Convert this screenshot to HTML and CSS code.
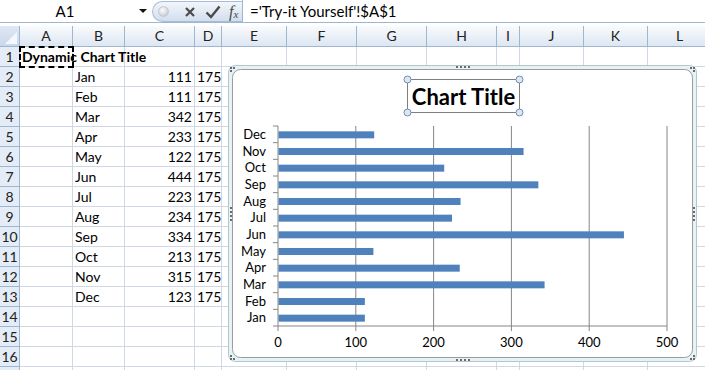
FILE: index.html
```html
<!DOCTYPE html>
<html lang="en">

<head>
    <meta charset="UTF-8">
    <title>Dynamic Chart Title</title>
    <link rel="stylesheet" href="styles.css">
</head>

<body>
    <div class="formula-bar">
        <div class="name-box">
            <span class="cell-ref">A1</span>
            <span class="dropdown"></span>
        </div>
        <div class="fx-pill">
            <span class="knob"></span>
            <svg class="fx-icon" width="12" height="12" viewBox="0 0 12 12">
                <path d="M2 2 L10 10 M10 2 L2 10" stroke="#4a4a4a" stroke-width="2.2" fill="none" />
            </svg>
            <svg class="fx-icon" width="16" height="14" viewBox="0 0 16 14">
                <path d="M1.5 7.5 L6 12 L14.5 1.5" stroke="#4a4a4a" stroke-width="2.4" fill="none" />
            </svg>
            <span class="fx-label">f<sub>x</sub></span>
        </div>
        <div class="formula">='Try-it Yourself'!$A$1</div>
    </div>

    <div class="sheet">
        <div class="grid" id="grid"></div>

        <svg class="chart" width="469" height="297" viewBox="0 0 469 297">
            <rect x="0.5" y="0.5" width="468" height="296" rx="7" fill="#e3f3f6" stroke="#b9c4ca" />
            <rect x="4.5" y="4.5" width="460" height="288" rx="8" fill="#fff" stroke="#9c9c9c" />

            <g class="handles">
                <rect x="2" y="2" width="2" height="2" /><rect x="5" y="2" width="2" height="2" /><rect x="2" y="5" width="2" height="2" />
                <rect x="462" y="2" width="2" height="2" /><rect x="465" y="2" width="2" height="2" /><rect x="465" y="5" width="2" height="2" />
                <rect x="2" y="290" width="2" height="2" /><rect x="2" y="293" width="2" height="2" /><rect x="5" y="293" width="2" height="2" />
                <rect x="465" y="290" width="2" height="2" /><rect x="462" y="293" width="2" height="2" /><rect x="465" y="293" width="2" height="2" />
                <rect x="228" y="1" width="2" height="2" /><rect x="232" y="1" width="2" height="2" /><rect x="236" y="1" width="2" height="2" /><rect x="240" y="1" width="2" height="2" />
                <rect x="228" y="294" width="2" height="2" /><rect x="232" y="294" width="2" height="2" /><rect x="236" y="294" width="2" height="2" /><rect x="240" y="294" width="2" height="2" />
                <rect x="2" y="142" width="2" height="2" /><rect x="2" y="146" width="2" height="2" /><rect x="2" y="150" width="2" height="2" /><rect x="2" y="154" width="2" height="2" />
                <rect x="465" y="142" width="2" height="2" /><rect x="465" y="146" width="2" height="2" /><rect x="465" y="150" width="2" height="2" /><rect x="465" y="154" width="2" height="2" />
            </g>

            <g class="axis">
                <line x1="127.8" y1="61" x2="127.8" y2="266" />
                <line x1="205.6" y1="61" x2="205.6" y2="266" />
                <line x1="283.4" y1="61" x2="283.4" y2="266" />
                <line x1="361.2" y1="61" x2="361.2" y2="266" />
                <line x1="439" y1="61" x2="439" y2="266" />
                <line x1="50" y1="61" x2="50" y2="266" />
                <line x1="50" y1="261" x2="439" y2="261" />
            </g>
            <g class="axis" id="cat-ticks"></g>
            <g id="bars"></g>
            <g class="cat-labels" id="cat-labels"></g>

            <g class="val-labels">
                <text x="50" y="282">0</text>
                <text x="127.8" y="282">100</text>
                <text x="205.6" y="282">200</text>
                <text x="283.4" y="282">300</text>
                <text x="361.2" y="282">400</text>
                <text x="439" y="282">500</text>
            </g>

            <rect x="179.5" y="14.5" width="112" height="33" fill="#fff" stroke="#7f7f7f" />
            <text class="chart-title" x="235.5" y="39.5">Chart Title</text>
            <g class="title-handles">
                <circle cx="179.5" cy="14.5" r="3.5" /><circle cx="291.5" cy="14.5" r="3.5" />
                <circle cx="179.5" cy="47.5" r="3.5" /><circle cx="291.5" cy="47.5" r="3.5" />
            </g>
        </svg>
    </div>

    <script>
        const months = ['Jan', 'Feb', 'Mar', 'Apr', 'May', 'Jun', 'Jul', 'Aug', 'Sep', 'Oct', 'Nov', 'Dec'];
        const values = [111, 111, 342, 233, 122, 444, 223, 234, 334, 213, 315, 123];
        const columns = ['A', 'B', 'C', 'D', 'E', 'F', 'G', 'H', 'I', 'J', 'K', 'L'];

        const grid = document.getElementById('grid');

        function addCell(className, text) {
            const div = document.createElement('div');
            div.className = className;
            div.textContent = text || '';
            grid.appendChild(div);
            return div;
        }

        addCell('corner');
        for (const col of columns) {
            addCell('col-head', col);
        }

        // row 17 only peeks in at the bottom edge, so it gets no number
        for (let row = 1; row <= 17; row++) {
            addCell('row-head', row < 17 ? row : '');
            for (let c = 0; c < columns.length; c++) {
                let text = '';
                let cls = 'cell';
                if (row === 1 && c === 0) {
                    text = 'Dynamic Chart Title';
                    cls += ' bold selected';
                }
                if (row >= 2 && row <= 13) {
                    if (c === 1) text = months[row - 2];
                    if (c === 2) { text = values[row - 2]; cls += ' num'; }
                    if (c === 3) { text = 175; cls += ' num'; }
                }
                addCell(cls, text);
            }
        }

        // bar chart, Dec on top
        const svgNs = 'http://www.w3.org/2000/svg';
        const plotTop = 61, step = 200 / 12, scale = 389 / 500;
        const bars = document.getElementById('bars');
        const labels = document.getElementById('cat-labels');
        const ticks = document.getElementById('cat-ticks');

        for (let i = 0; i <= 12; i++) {
            const line = document.createElementNS(svgNs, 'line');
            const y = plotTop + step * i;
            line.setAttribute('x1', 45);
            line.setAttribute('x2', 50);
            line.setAttribute('y1', y);
            line.setAttribute('y2', y);
            ticks.appendChild(line);
        }

        for (let i = 0; i < 12; i++) {
            const m = 11 - i;
            const cy = plotTop + step * (i + 0.5);
            const bar = document.createElementNS(svgNs, 'rect');
            bar.setAttribute('x', 50.5);
            bar.setAttribute('y', cy - 3);
            bar.setAttribute('width', values[m] * scale);
            bar.setAttribute('height', 7);
            bar.setAttribute('fill', '#4f81bd');
            bars.appendChild(bar);

            const label = document.createElementNS(svgNs, 'text');
            label.setAttribute('x', 38);
            label.setAttribute('y', cy + 4.5);
            label.textContent = months[m];
            labels.appendChild(label);
        }
    </script>
</body>

</html>
```

FILE: styles.css
```css
body {
    margin: 0;
    width: 705px;
    height: 370px;
    overflow: hidden;
    background-color: #fff;
    font-family: Lato, "Liberation Sans", sans-serif;
    color: #000;
}

.formula-bar {
    display: flex;
    height: 22px;
    border-bottom: 1px solid #9eb6ce;
}

.name-box {
    width: 152px;
    display: flex;
    align-items: center;
}

.cell-ref {
    width: 130px;
    text-align: center;
    font-size: 15px;
}

.dropdown {
    margin-left: 9px;
    border-left: 4px solid transparent;
    border-right: 4px solid transparent;
    border-top: 4px solid #111;
}

.fx-pill {
    width: 84px;
    height: 19px;
    margin-top: 1px;
    border: 1px solid #a7bcd5;
    border-right: none;
    border-radius: 11px 0 0 11px;
    background: linear-gradient(#f2f6fb, #d2deee);
    display: flex;
    align-items: center;
    gap: 9px;
    padding-left: 5px;
}

.knob {
    width: 9px;
    height: 9px;
    border-radius: 50%;
    background: radial-gradient(circle at 40% 35%, #fdfdfd, #b9bfc7);
    border: 1px solid #c3c9d2;
    margin-right: 6px;
}

.fx-label {
    font-family: "Liberation Serif", serif;
    font-style: italic;
    font-size: 16px;
    color: #4a4a4a;
    margin-left: -1px;
}

.fx-label sub {
    font-size: 11px;
    vertical-align: -1px;
}

.formula {
    flex: 1;
    border-left: 1px solid #9eb6ce;
    padding-left: 7px;
    line-height: 22px;
    font-size: 15px;
    white-space: nowrap;
}

.sheet {
    position: relative;
    margin-top: 3px;
    height: 344px;
    overflow: hidden;
}

.grid {
    display: grid;
    grid-template-columns: 20px 53px 52px 70px 27px 65px 70px 70px 70px 23px 64px 64px 64px;
    grid-template-rows: 21px repeat(17, 20px);
    width: 712px;
}

.corner {
    background: linear-gradient(#dfe8f4, #c9d7ea);
    border-right: 1px solid #9eb6ce;
    border-bottom: 1px solid #9eb6ce;
    position: relative;
}

.corner::after {
    content: "";
    position: absolute;
    right: 2px;
    bottom: 2px;
    border-left: 12px solid transparent;
    border-bottom: 12px solid #f4f7fb;
}

.col-head {
    background: linear-gradient(#f9fbfd, #dde6f2);
    border-right: 1px solid #9eb6ce;
    border-bottom: 1px solid #9eb6ce;
    text-align: center;
    font-size: 14px;
    line-height: 20px;
    color: #222;
}

.row-head {
    background-color: #e4ecf7;
    border-right: 1px solid #9eb6ce;
    border-bottom: 1px solid #9eb6ce;
    text-align: center;
    font-size: 14px;
    line-height: 19px;
    color: #222;
}

.cell {
    border-right: 1px solid #d0d7e5;
    border-bottom: 1px solid #d0d7e5;
    font-size: 14px;
    line-height: 19px;
    padding: 0 2px;
    white-space: nowrap;
    min-width: 0;
}

.num {
    text-align: right;
}

.bold {
    font-weight: bold;
}

.selected {
    outline: 2px dashed #000;
    outline-offset: -1px;
    position: relative;
    z-index: 1;
}

.chart {
    position: absolute;
    left: 228px;
    top: 39px;
    z-index: 2;
}

.handles rect {
    fill: #6b6b6b;
}

.axis line {
    stroke: #868686;
    stroke-width: 1;
}

.cat-labels text {
    font-family: Lato, "Liberation Sans", sans-serif;
    font-size: 13px;
    text-anchor: end;
}

.val-labels text {
    font-family: Lato, "Liberation Sans", sans-serif;
    font-size: 13px;
    text-anchor: middle;
}

.chart-title {
    font-family: Lato, "Liberation Sans", sans-serif;
    font-size: 22px;
    font-weight: bold;
    text-anchor: middle;
}

.title-handles circle {
    fill: #dde7f2;
    stroke: #6f8fb4;
    stroke-width: 1;
}
```
